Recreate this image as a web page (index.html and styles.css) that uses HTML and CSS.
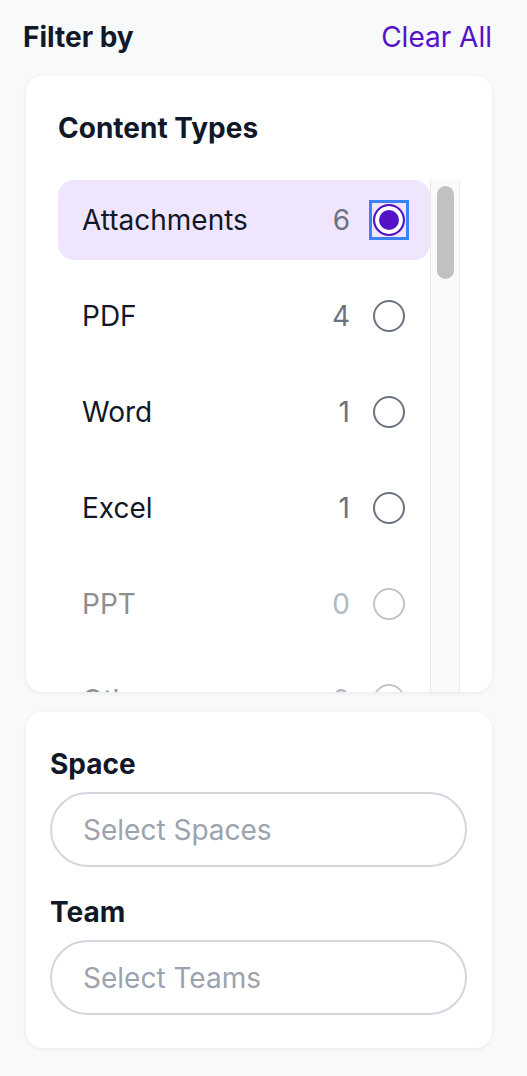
FILE: index.html
```html
<!DOCTYPE html>
<html lang="en">
<head>
    <meta charset="UTF-8">
    <title>Filter by</title>
    <link rel="stylesheet" href="styles.css">
</head>
<body>
    <div class="panel">
        <div class="panel-head">
            <h2>Filter by</h2>
            <a class="clear-all" href="#">Clear All</a>
        </div>

        <!-- content types -->
        <div class="card types-card">
            <h3>Content Types</h3>
            <div class="type-list">
                <div class="type-rows">
                    <label class="type-row selected"><span class="name">Attachments</span><span class="count">6</span><span class="radio-box"><span class="radio"></span></span></label>
                    <label class="type-row"><span class="name">PDF</span><span class="count">4</span><span class="radio-box"><span class="radio"></span></span></label>
                    <label class="type-row"><span class="name">Word</span><span class="count">1</span><span class="radio-box"><span class="radio"></span></span></label>
                    <label class="type-row"><span class="name">Excel</span><span class="count">1</span><span class="radio-box"><span class="radio"></span></span></label>
                    <label class="type-row disabled"><span class="name">PPT</span><span class="count">0</span><span class="radio-box"><span class="radio"></span></span></label>
                    <label class="type-row disabled"><span class="name">Other</span><span class="count">0</span><span class="radio-box"><span class="radio"></span></span></label>
                </div>
                <div class="scroll-track"><div class="scroll-thumb"></div></div>
            </div>
        </div>

        <!-- space / team -->
        <div class="card select-card">
            <div class="field">
                <div class="field-label">Space</div>
                <div class="select-box">Select Spaces</div>
            </div>
            <div class="field">
                <div class="field-label">Team</div>
                <div class="select-box">Select Teams</div>
            </div>
        </div>
    </div>
</body>
</html>
```

FILE: styles.css
```css
body {
    margin: 0;
    background: #f8f9fb;
    font-family: Inter, "Noto Sans", sans-serif;
    color: #111827;
}
.panel {
    width: 466px;
    padding: 17px 0 26px 26px;
}
.panel-head {
    display: flex;
    justify-content: space-between;
    align-items: center;
    height: 40px;
    margin-bottom: 19px;
}
.panel-head h2 {
    margin: 0 0 0 -3px;
    font-size: 28px;
    font-weight: 700;
}
.clear-all {
    color: #5512c6;
    font-size: 28px;
    text-decoration: none;
}
.card {
    background: #fff;
    border-radius: 16px;
    box-shadow: 0 1px 4px rgba(0,0,0,0.07);
}
.types-card {
    padding: 32px 32px 0 32px;
    margin-bottom: 20px;
}
.types-card h3 {
    margin: 0 0 32px 0;
    font-size: 28px;
    line-height: 40px;
    font-weight: 700;
}
.type-list {
    height: 512px;
    display: flex;
}
.type-rows {
    flex: 1;
    overflow: hidden;
    display: flex;
    flex-direction: column;
    gap: 16px;
}
.scroll-track {
    width: 30px;
    box-sizing: border-box;
    background: #fafafa;
    border-left: 1px solid #e8e8e8;
    border-right: 1px solid #ededed;
    padding: 6px 5px 0 6px;
}
.scroll-thumb {
    height: 93px;
    background: #c1c1c1;
    border-radius: 9px;
}
.type-row {
    flex: 0 0 80px;
    display: flex;
    align-items: center;
    padding: 0 25px 0 24px;
    border-radius: 16px;
    font-size: 28px;
    cursor: pointer;
}
.type-row .name {
    flex: 1;
}
.type-row .count {
    color: #6b7280;
    margin-right: 23px;
}
.type-row.selected {
    background: #efe6fd;
}
.type-row.disabled .name {
    color: #8e8e8e;
}
.type-row.disabled .count {
    color: #b4b8bf;
}
.radio-box {
    width: 32px;
    height: 32px;
}
.radio {
    display: block;
    box-sizing: border-box;
    width: 32px;
    height: 32px;
    border: 2px solid #6b7280;
    border-radius: 50%;
    background: #fff;
}
.type-row.disabled .radio {
    border-color: #c4c4c4;
}
.type-row.selected .radio-box {
    outline: 3px solid #3b82f6;
    outline-offset: 1px;
}
.type-row.selected .radio {
    border-color: #5512c6;
    background: #5512c6;
    box-shadow: inset 0 0 0 4px #fff;
}
.select-card {
    padding: 32px 25px 33px 24px;
}
.field + .field {
    margin-top: 25px;
}
.field-label {
    font-size: 28px;
    font-weight: 700;
    line-height: 40px;
    margin-bottom: 8px;
}
.select-box {
    height: 75px;
    box-sizing: border-box;
    border: 2px solid #d3d6dc;
    border-radius: 38px;
    padding-left: 31px;
    display: flex;
    align-items: center;
    font-size: 28px;
    line-height: 34px;
    color: #9ca3af;
}
```
